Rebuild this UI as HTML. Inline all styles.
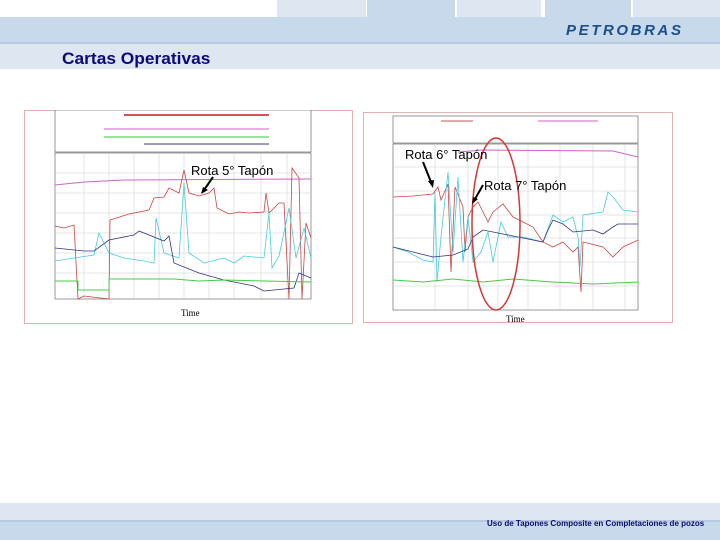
<!DOCTYPE html>
<html><head><meta charset="utf-8"><style>
body{margin:0;width:720px;height:540px;position:relative;background:#fff;font-family:"Liberation Sans",sans-serif;overflow:hidden}
.a{position:absolute}
</style></head><body>
<div class="a" style="left:277px;top:0;width:89px;height:17px;background:#dde6f1"></div>
<div class="a" style="left:367px;top:0;width:88px;height:17px;background:#c9d9ec"></div>
<div class="a" style="left:457px;top:0;width:84px;height:17px;background:#dde6f1"></div>
<div class="a" style="left:545px;top:0;width:86px;height:17px;background:#c9d9ec"></div>
<div class="a" style="left:633px;top:0;width:87px;height:17px;background:#dde6f1"></div>
<div class="a" style="left:0;top:17px;width:720px;height:26px;background:#c9d9ec"></div>
<div class="a" style="left:0;top:42px;width:720px;height:2px;background:#b5c9e0"></div>
<div class="a" style="left:0;top:44px;width:720px;height:25px;background:#dde6f1"></div>
<div class="a" style="left:566px;top:22px;font-size:15px;font-weight:bold;font-style:italic;color:#1a4f8a;letter-spacing:2.6px">PETROBRAS</div>
<div class="a" style="left:62px;top:49px;font-size:17px;font-weight:bold;color:#0a0a7a;transform:scaleX(1.02);transform-origin:left">Cartas Operativas</div>

<svg class="a" style="left:24px;top:110px" width="329" height="214">
<rect x="0.5" y="0.5" width="328" height="213" fill="#fff" stroke="#e6b0b0"/>
<rect x="31" y="0" width="256" height="42" fill="#fff" stroke="#555" stroke-width="0.6"/>
<line x1="100" y1="5" x2="245" y2="5" stroke="#c55" stroke-width="2"/>
<line x1="80" y1="19" x2="245" y2="19" stroke="#c6c"/>
<line x1="80" y1="27" x2="245" y2="27" stroke="#3c3"/>
<line x1="120" y1="34" x2="245" y2="34" stroke="#339"/>
<rect x="31" y="43" width="256" height="146" fill="#fff" stroke="#555" stroke-width="0.6"/>
<g stroke="#ccc" stroke-width="0.5">
<line x1="31" y1="63" x2="287" y2="63"/><line x1="31" y1="83" x2="287" y2="83"/><line x1="31" y1="103" x2="287" y2="103"/><line x1="31" y1="123" x2="287" y2="123"/><line x1="31" y1="143" x2="287" y2="143"/><line x1="31" y1="163" x2="287" y2="163"/>
<line x1="60" y1="43" x2="60" y2="189"/><line x1="85" y1="43" x2="85" y2="189"/><line x1="110" y1="43" x2="110" y2="189"/><line x1="135" y1="43" x2="135" y2="189"/><line x1="160" y1="43" x2="160" y2="189"/><line x1="185" y1="43" x2="185" y2="189"/><line x1="210" y1="43" x2="210" y2="189"/><line x1="237" y1="43" x2="237" y2="189"/><line x1="263" y1="43" x2="263" y2="189"/>
</g>
<polyline fill="none" stroke="#c6c" points="31,75 60,72 100,70 287,69"/>
<polyline fill="none" stroke="#c44" stroke-width="0.8" points="31,116 40,118 50,115 54,189 60,186 85,189 86,110 105,104 125,100 130,88 140,87 145,78 155,83 160,60 165,83 175,86 185,83 190,78 193,98 205,104 215,102 225,103 240,102 242,83 245,103 255,93 260,93 265,189 268,58 275,68 278,189 282,113 287,128"/>
<polyline fill="none" stroke="#4cd" stroke-width="0.8" points="31,151 50,148 70,145 75,123 85,143 100,148 120,151 130,153 132,108 140,143 155,148 160,73 165,143 180,153 200,148 210,153 220,146 240,148 245,103 248,158 255,146 265,98 272,148 280,118 287,148"/>
<polyline fill="none" stroke="#338" stroke-width="0.8" points="31,138 60,141 70,141 85,130 110,125 115,121 140,131 145,126 150,153 175,163 200,170 230,176 240,181 270,178 275,163 287,168"/>
<polyline fill="none" stroke="#4c4" stroke-width="1" points="31,171 54,171 54,180 85,180 85,169 150,169 175,171 200,170 287,172"/>
<text x="157" y="206" font-size="9" font-family="Liberation Serif">Time</text>
</svg>
<div class="a" style="left:191px;top:163px;font-size:13px;color:#000">Rota 5° Tapón</div>
<svg class="a" style="left:195px;top:175px" width="30" height="20"><line x1="18" y1="2" x2="9" y2="15" stroke="#000" stroke-width="2"/><polygon points="6,19 8,12 13,15" fill="#000"/></svg>

<svg class="a" style="left:363px;top:112px" width="310" height="211">
<rect x="0.5" y="0.5" width="309" height="210" fill="#fff" stroke="#e6b0b0"/>
<rect x="30" y="4" width="245" height="27" fill="#fff" stroke="#555" stroke-width="0.6"/>
<line x1="78" y1="9" x2="110" y2="9" stroke="#c55"/><line x1="175" y1="9" x2="235" y2="9" stroke="#c6c"/>
<rect x="30" y="32" width="245" height="166" fill="#fff" stroke="#555" stroke-width="0.6"/>
<g stroke="#ccc" stroke-width="0.5">
<line x1="30" y1="55" x2="275" y2="55"/><line x1="30" y1="79" x2="275" y2="79"/><line x1="30" y1="103" x2="275" y2="103"/><line x1="30" y1="126" x2="275" y2="126"/><line x1="30" y1="150" x2="275" y2="150"/><line x1="30" y1="174" x2="275" y2="174"/>
<line x1="72" y1="32" x2="72" y2="198"/><line x1="105" y1="32" x2="105" y2="198"/><line x1="135" y1="32" x2="135" y2="198"/><line x1="165" y1="32" x2="165" y2="198"/><line x1="197" y1="32" x2="197" y2="198"/><line x1="230" y1="32" x2="230" y2="198"/><line x1="262" y1="32" x2="262" y2="198"/>
</g>
<polyline fill="none" stroke="#c6c" points="95,40 120,38 250,39 275,45"/>
<polyline fill="none" stroke="#c44" stroke-width="0.8" points="30,85 50,84 70,82 75,75 78,88 85,72 88,160 92,75 100,95 102,140 105,105 110,95 115,90 120,100 125,110 130,100 140,92 150,105 170,115 180,130 190,135 200,130 210,140 215,135 218,180 220,130 240,135 250,145 260,135 275,128"/>
<polyline fill="none" stroke="#4cd" stroke-width="0.8" points="30,135 45,140 60,148 70,150 72,80 74,170 78,125 85,60 90,140 95,65 100,150 105,105 110,150 118,140 125,120 130,150 138,110 145,125 160,125 180,130 190,103 200,110 210,105 215,125 217,155 220,103 240,100 245,80 250,85 260,98 275,100"/>
<polyline fill="none" stroke="#338" stroke-width="0.8" points="30,135 50,140 70,145 90,143 105,137 110,125 120,118 140,122 160,126 180,130 185,118 190,108 200,112 210,120 230,118 240,122 250,115 255,112 275,112"/>
<polyline fill="none" stroke="#4c4" stroke-width="1" points="30,168 60,170 90,167 120,170 150,167 190,170 230,172 275,170"/>
<ellipse cx="133" cy="112" rx="24" ry="86" fill="none" stroke="#d33" stroke-width="1.5"/>
<text x="143" y="210" font-size="9" font-family="Liberation Serif">Time</text>
</svg>
<div class="a" style="left:405px;top:147px;font-size:13px;color:#000">Rota 6° Tapón</div>
<div class="a" style="left:484px;top:178px;font-size:13px;color:#000">Rota 7° Tapón</div>
<svg class="a" style="left:420px;top:160px" width="20" height="30"><line x1="3" y1="2" x2="11" y2="22" stroke="#000" stroke-width="2"/><polygon points="13,28 8,21 14,20" fill="#000"/></svg>
<svg class="a" style="left:468px;top:183px" width="20" height="25"><line x1="15" y1="2" x2="7" y2="16" stroke="#000" stroke-width="2"/><polygon points="4,21 5,14 10,16" fill="#000"/></svg>

<div class="a" style="left:0;top:503px;width:720px;height:17px;background:#dde6f1"></div>
<div class="a" style="left:0;top:520px;width:720px;height:2px;background:#b5c9e0"></div>
<div class="a" style="left:0;top:522px;width:720px;height:18px;background:#c9d9ec"></div>
<div class="a" style="left:487px;top:519px;font-size:8px;font-weight:bold;color:#0a0a6a">Uso de Tapones Composite en Completaciones de pozos</div>
</body></html>
